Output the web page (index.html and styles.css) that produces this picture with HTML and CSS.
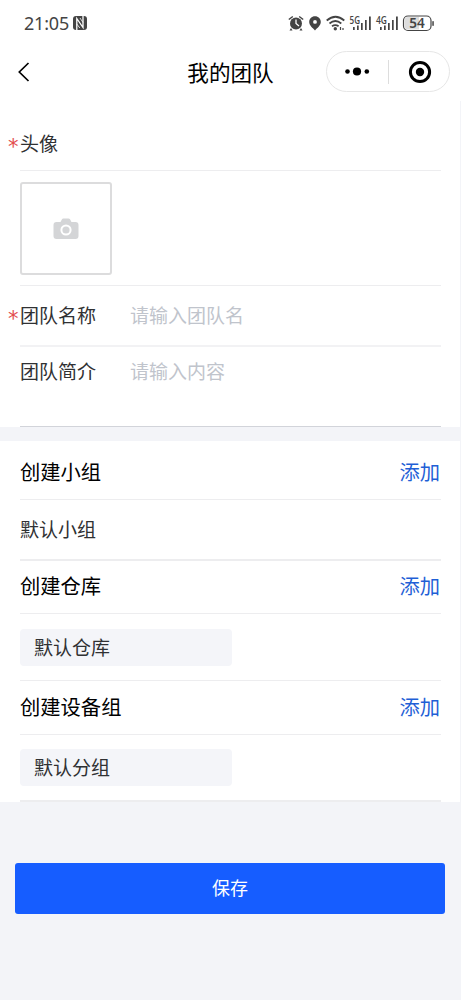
FILE: index.html
```html
<!DOCTYPE html>
<html lang="zh-CN">
<head>
<meta charset="utf-8">
<title>我的团队</title>
<link rel="stylesheet" href="styles.css">
</head>
<body>
<div class="status">
  <span class="clock">21:05</span>
  <svg class="nfc" width="14" height="14" viewBox="0 0 14 14"><rect x="0" y="0" width="14" height="14" rx="3" fill="#444"/><path d="M3.800 14V2.500L10 11.500V0" fill="none" stroke="#fff" stroke-width="1.300"/><path d="M7 2l3 4.500M3.800 8l3 4" fill="none" stroke="#fff" stroke-width=".8"/></svg>
  <svg class="signals" width="148" height="20" viewBox="287 12 148 20">
    <g fill="#444">
      <circle cx="296" cy="22.500" r="6"/>
      <path d="M291 27l-1.500 2.500h3zM301 27l1.500 2.500h-3z"/>
      <path d="M288.800 18.500l4-3M303.200 18.500l-4-3" stroke="#444" stroke-width="1.500"/>
      <path d="M296 18.500v4l3 2.500" fill="none" stroke="#fff" stroke-width="1.300"/>
      <path fill-rule="evenodd" d="M315 15.300c-3.400 0-5.800 2.500-5.800 5.700 0 3.500 3.700 6 5.800 8.500 2.100-2.500 5.800-5 5.800-8.500 0-3.200-2.400-5.700-5.800-5.700zm0 3.700a1.900 1.900 0 1 1 0 3.800 1.900 1.900 0 0 1 0-3.800z"/>
      <circle cx="335.300" cy="27.700" r="1.700"/>
      <path d="M326.700 19.500q8.800-7.500 17.600 0M329.500 22.500q5.800-5 11.800 0M332 25.300q3.300-2.500 6.600 0" fill="none" stroke="#444" stroke-width="1.700"/>
      <path d="M340.500 29v-3M343 29v-2" stroke="#444" stroke-width="1.200"/>
      <path d="M353 26h1.700v3H353zM357 24.500h1.700V29H357zM361 22h1.700v7H361zM365 19h1.700v10H365zM369 15.500h1.800V29H369zM380 26h1.700v3H380zM384 24.500h1.700V29H384zM388 22h1.700v7H388zM392 19h1.700v10H392zM396 15.500h1.800V29H396z"/>
      <text x="349.500" y="22.500" textLength="10.500" lengthAdjust="spacingAndGlyphs" class="net">5G</text>
      <text x="376" y="22.500" textLength="11" lengthAdjust="spacingAndGlyphs" class="net">4G</text>
      <rect x="403.500" y="15" width="27.500" height="14.500" rx="4.500" fill="#fff" stroke="#444" stroke-width="1.200"/>
      <path d="M408 16h11v12.500h-11a3.500 3.500 0 0 1-3.500-3.500v-5.500a3.500 3.500 0 0 1 3.500-3.500z" fill="#ddd"/>
      <rect x="432.300" y="20" width="1.500" height="5" rx=".7"/>
      <text x="417" y="27" text-anchor="middle" class="battery">54</text>
    </g>
  </svg>
</div>
<header class="nav">
  <svg class="back" width="12" height="20" viewBox="0 0 12 20"><path d="M10.500 1L1.300 10l9.200 9" fill="none" stroke="#000" stroke-width="1.700"/></svg>
  <h1 class="title">我的团队</h1>
  <div class="capsule">
    <svg width="122" height="39" viewBox="0 0 122 39"><circle cx="20.500" cy="19.500" r="2.300"/><circle cx="30" cy="19.500" r="4.100"/><circle cx="39.800" cy="19.500" r="2.300"/><path d="M61.500 8v24" stroke="#ddd"/><circle cx="93" cy="20" r="9.600" fill="none" stroke="#000" stroke-width="3"/><circle cx="93" cy="20" r="4.200"/></svg>
  </div>
</header>
<main>
  <section class="card">
    <div class="row label-row"><span class="star">*</span>头像</div>
    <div class="row photo-row">
      <div class="photo">
        <svg width="26" height="22" viewBox="0 0 26 22"><path d="M3.500 4h4L9 1.300Q9.300.500 10.300.500h5.200q1 0 1.500.800L18.500 4h4Q25.500 4 25.500 7v11q0 3-3 3h-19q-3 0-3-3V7q0-3 3-3z" fill="#d4d5d7"/><circle cx="13" cy="12" r="4.600" fill="#d4d5d7" stroke="#fff" stroke-width="2"/></svg>
      </div>
    </div>
    <div class="row name-row"><span class="star">*</span><span class="key">团队名称</span><span class="hint">请输入团队名</span></div>
    <div class="row intro-row"><span class="key">团队简介</span><span class="hint">请输入内容</span></div>
  </section>
  <section class="card">
    <div class="row head first"><span>创建小组</span><a class="add">添加</a></div>
    <div class="row group-row">默认小组</div>
    <div class="row head"><span>创建仓库</span><a class="add">添加</a></div>
    <div class="row item"><div class="pill">默认仓库</div></div>
    <div class="row head third"><span>创建设备组</span><a class="add">添加</a></div>
    <div class="row item last"><div class="pill">默认分组</div></div>
  </section>
  <button class="save">保存</button>
</main>
</body>
</html>
```

FILE: styles.css
```css
* { box-sizing: border-box; }
body {
  margin: 0;
  height: 1000px;
  background: #f3f4f8;
  color: #303133;
  font-family: "Noto Sans CJK SC", sans-serif;
  font-size: 19px;
  line-height: 28px;
}
.status {
  display: flex;
  align-items: center;
  height: 45px;
  padding: 0 26px 0 24px;
  background: #fff;
}
.clock {
  width: 48px;
  color: #444;
  font-family: "Noto Sans", sans-serif;
  font-size: 18px;
  letter-spacing: -0.2px;
}
.nfc { margin-left: 1px; }
.signals { margin-left: auto; }
.net { font: 600 10.5px "Open Sans", sans-serif; }
.battery { font: 600 13.5px "Noto Sans", sans-serif; }
.nav {
  position: relative;
  display: flex;
  align-items: center;
  justify-content: center;
  height: 56px;
  background: #fff;
}
.back { position: absolute; left: 18px; top: 17px; }
.title {
  margin: 0;
  padding-bottom: 2px;
  color: #000;
  font-size: 21.6px;
  font-weight: 400;
  line-height: 32px;
}
.capsule {
  position: absolute;
  top: 6px;
  right: 11px;
  width: 124px;
  height: 41px;
  border: 1px solid #e6e6e6;
  border-radius: 21px;
}
.capsule svg { display: block; }
.card {
  margin: 0 1px 14px 0;
  padding: 0 19px 0 20px;
  background: #fff;
}
.row {
  position: relative;
  display: flex;
  border-bottom: 1px solid #ededef;
}
.star {
  position: absolute;
  left: -12px;
  color: #e34d4d;
  font-family: "DejaVu Sans", sans-serif;
  font-size: 21px;
  line-height: 36px;
}
.label-row { height: 70px; padding-top: 28px; }
.photo-row { height: 115px; padding-top: 11px; }
.photo {
  display: flex;
  align-items: center;
  justify-content: center;
  width: 92px;
  height: 93px;
  border: 2px solid #dcdcdd;
  border-radius: 3px;
}
.name-row { height: 61px; padding-top: 15px; border-bottom: 2px solid #f2f2f4; }
.intro-row { height: 80px; padding-top: 10px; border-bottom-color: #d2d4da; }
.key { width: 110px; }
.hint { color: #c0c4cc; }
.head {
  justify-content: space-between;
  height: 53px;
  padding-top: 10px;
  color: #000;
  font-size: 20.3px;
}
.head.first { height: 59px; padding-top: 16px; }
.head.third { height: 54px; padding-top: 11px; }
.add { margin-right: 1px; color: #1f5fd6; }
.group-row { height: 61px; padding-top: 15px; border-bottom-width: 2px; }
.item { height: 67px; padding-top: 15px; }
.item.last { padding-top: 14px; border-bottom-width: 2px; }
.pill {
  width: 212px;
  height: 37px;
  padding-left: 14px;
  border-radius: 4px;
  background: #f4f5f9;
  line-height: 35px;
}
.save {
  display: block;
  width: 430px;
  height: 51px;
  margin: 61px 0 0 15px;
  padding: 0 0 3px;
  border: 0;
  border-radius: 3px;
  background: #165dff;
  color: #fff;
  font: 18px/48px "Noto Sans CJK SC", sans-serif;
}
```
